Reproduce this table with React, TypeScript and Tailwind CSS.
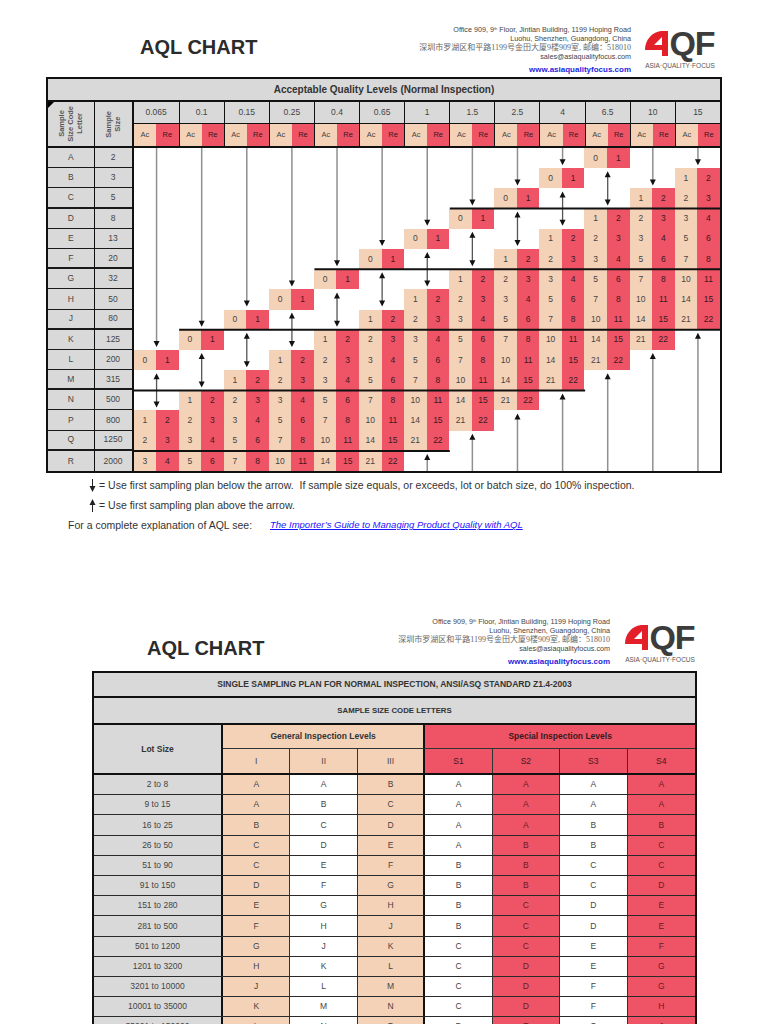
import React from "react";

const LEVELS = ["0.065", "0.1", "0.15", "0.25", "0.4", "0.65", "1", "1.5", "2.5", "4", "6.5", "10", "15"];

const ROWS: [string, string][] = [
  ["A", "2"], ["B", "3"], ["C", "5"], ["D", "8"], ["E", "13"], ["F", "20"],
  ["G", "32"], ["H", "50"], ["J", "80"], ["K", "125"], ["L", "200"], ["M", "315"],
  ["N", "500"], ["P", "800"], ["Q", "1250"], ["R", "2000"],
];

// step along the diagonal -> Ac / Re (steps 1 and 2 are arrows)
const PLANS: Record<number, [number, number]> = {
  0: [0, 1], 3: [1, 2], 4: [2, 3], 5: [3, 4], 6: [5, 6], 7: [7, 8], 8: [10, 11], 9: [14, 15], 10: [21, 22],
};

const GROUPS = [3, 6, 9, 12, 15];
const DATA_W = 586.5;
const CW = DATA_W / 26;
const RH = 20.2;

const PEACH = "bg-[#f4d2b8]";
const RED = "bg-[#ef5366]";

const LOTS: [string, string][] = [
  ["2 to 8", "AABAAAA"],
  ["9 to 15", "ABCAAAA"],
  ["16 to 25", "BCDAABB"],
  ["26 to 50", "CDEABBC"],
  ["51 to 90", "CEFBBCC"],
  ["91 to 150", "DFGBBCD"],
  ["151 to 280", "EGHBCDE"],
  ["281 to 500", "FHJBCDE"],
  ["501 to 1200", "GJKCCEF"],
  ["1201 to 3200", "HKLCDEG"],
  ["3201 to 10000", "JLMCDFG"],
  ["10001 to 35000", "KMNCDFH"],
  ["35001 to 150000", "LNPDEGJ"],
  ["150001 to 500000", "MPQDEGJ"],
  ["500001 and over", "NQRDEHK"],
];

const LOT_BG = ["bg-[#f4d2b8]", "bg-white", "bg-[#f4d2b8]", "bg-white", "bg-[#ef5366]", "bg-white", "bg-[#ef5366]"];

function Logo({ className }: { className: string }) {
  return (
    <div className={`flex w-[76px] flex-col items-center ${className}`}>
      <div className="flex h-[26px] items-center">
        <svg width="24" height="25" viewBox="0 0 24 25" className="shrink-0">
          <path
            fill="#e3202a"
            fillRule="evenodd"
            d="M0,19 C0,9 7,1 16,0 L23,0 L23,25 L17,25 L17,19 Z M17,14 L17,6 L9,14 Z"
          />
        </svg>
        <span className="text-[34px] font-bold leading-[26px] tracking-[-1px] text-[#3c3c3c]">QF</span>
      </div>
      <div className="mt-[6px] whitespace-nowrap text-[6.5px] leading-[8px] text-[#555]">
        ASIA<span className="text-[#e3202a]">·</span>QUALITY<span className="text-[#e3202a]">·</span>FOCUS
      </div>
    </div>
  );
}

function Header({
  boxCls,
  titleCls,
  addrCls,
  logoCls,
}: {
  boxCls: string;
  titleCls: string;
  addrCls: string;
  logoCls: string;
}) {
  return (
    <div className={`flex items-start ${boxCls}`}>
      <div className={`text-[20px] font-bold leading-[24px] text-[#2b2b2b] ${titleCls}`}>AQL CHART</div>
      <div className={`text-right text-[7.2px] leading-[9px] text-[#444] ${addrCls}`}>
        <div>Office 909, 9<sup className="text-[4px]">th</sup> Floor, Jintian Building, 1199 Hoping Road</div>
        <div>Luohu, Shenzhen, Guangdong, China</div>
        <div className="font-['Liberation_Serif','Noto_Sans_CJK_SC',serif] text-[8px] text-[#666]">
          深圳市罗湖区和平路1199号金田大厦9楼909室, 邮编：518010
        </div>
        <div>sales@asiaqualityfocus.com</div>
        <div className="mt-[4px] text-[8px] font-bold leading-[10px] text-[#1f1fe0]">www.asiaqualityfocus.com</div>
      </div>
      <Logo className={logoCls} />
    </div>
  );
}

function TableArrows() {
  const H = 16 * RH;
  const lines: React.ReactNode[] = [];
  const down = (x: number, y: number) => `${x - 3},${y - 6} ${x + 3},${y - 6} ${x},${y}`;
  const up = (x: number, y: number) => `${x - 3},${y + 6} ${x + 3},${y + 6} ${x},${y}`;

  LEVELS.forEach((_, j) => {
    const x = (2 * j + 1) * CW;
    const rowsDown = j <= 9 ? 10 - j : j === 11 ? 2 : j === 12 ? 1 : 0;
    if (rowsDown > 0) {
      const tip = rowsDown * RH - 3;
      lines.push(<line key={`d${j}`} x1={x} y1={0} x2={x} y2={tip - 5} stroke="#8f8f8f" strokeWidth={1.5} />);
      lines.push(<polygon key={`dh${j}`} points={down(x, tip)} fill="#111" />);
    }
    if (j <= 10) {
      const top = (11 - j) * RH + 3;
      const bot = (13 - j) * RH - 3;
      lines.push(<line key={`b${j}`} x1={x} y1={top + 5} x2={x} y2={bot - 5} stroke="#555" strokeWidth={1.3} />);
      lines.push(<polygon key={`bu${j}`} points={up(x, top)} fill="#111" />);
      lines.push(<polygon key={`bd${j}`} points={down(x, bot)} fill="#111" />);
    }
    if (j >= 6) {
      const tip = (21 - j) * RH + 3;
      lines.push(<line key={`u${j}`} x1={x} y1={tip + 5} x2={x} y2={H} stroke="#8f8f8f" strokeWidth={1.5} />);
      lines.push(<polygon key={`uh${j}`} points={up(x, tip)} fill="#111" />);
    }
  });

  GROUPS.forEach((g) => {
    const x1 = Math.max(0, 10 - g) * 2 * CW;
    const x2 = Math.min(13, 22 - g) * 2 * CW;
    lines.push(<line key={`g${g}`} x1={x1} y1={g * RH} x2={x2} y2={g * RH} stroke="#111" strokeWidth={2} />);
  });

  return (
    <svg
      className="pointer-events-none absolute inset-0"
      width={DATA_W}
      height={H}
      viewBox={`0 0 ${DATA_W} ${H}`}
    >
      {lines}
    </svg>
  );
}

function AqlTable() {
  return (
    <div className="ml-[46px] w-[676px] border-2 border-[#111] text-[8.5px] text-[#444]">
      <div className="flex h-[23px] items-center justify-center border-b-2 border-[#111] bg-[#d9d9d9] text-[10px] font-bold text-[#333]">
        Acceptable Quality Levels (Normal Inspection)
      </div>

      <div className="flex border-b-2 border-[#111]">
        <div className="relative flex w-[46.5px] items-center justify-center border-r-[1.5px] border-[#111] bg-[#d9d9d9]">
          <span className="absolute left-0 top-0 h-0 w-0 border-r-[6px] border-t-[6px] border-r-transparent border-t-black" />
          <div className="rotate-180 text-center text-[7.5px] font-bold leading-[9px] text-[#555] [writing-mode:vertical-rl]">
            Sample
            <br />
            Size Code
            <br />
            Letter
          </div>
        </div>
        <div className="flex w-[39px] items-center justify-center border-r-2 border-[#111] bg-[#d9d9d9]">
          <div className="rotate-180 text-center text-[7.5px] font-bold leading-[9px] text-[#555] [writing-mode:vertical-rl]">
            Sample
            <br />
            Size
          </div>
        </div>
        <div className="w-[586.5px]">
          <div className="flex h-[22px] border-b border-[#111]">
            {LEVELS.map((l, j) => (
              <div
                key={l}
                className={`flex w-[45.115px] items-center justify-center bg-[#d9d9d9] ${j ? "border-l-[1.5px] border-[#111]" : ""}`}
              >
                {l}
              </div>
            ))}
          </div>
          <div className="flex h-[22px] text-[7.5px]">
            {LEVELS.map((l, j) => (
              <div key={l} className={`flex w-[45.115px] ${j ? "border-l-[1.5px] border-[#111]" : ""}`}>
                <div className={`flex flex-1 items-center justify-center ${PEACH}`}>Ac</div>
                <div className={`flex flex-1 items-center justify-center text-[#3a1a1e] ${RED}`}>Re</div>
              </div>
            ))}
          </div>
        </div>
      </div>

      <div className="flex">
        <div className="w-[46.5px] border-r-[1.5px] border-[#111] bg-[#d9d9d9]">
          {ROWS.map(([letter], i) => (
            <div
              key={letter}
              className={`flex h-[20.2px] items-center justify-center border-[#1a1a1a] ${
                i === 15 ? "" : GROUPS.includes(i + 1) ? "border-b-[2.5px]" : "border-b-[1.5px]"
              }`}
            >
              {letter}
            </div>
          ))}
        </div>
        <div className="w-[39px] border-r-2 border-[#111] bg-[#d9d9d9]">
          {ROWS.map(([letter, size], i) => (
            <div
              key={letter}
              className={`flex h-[20.2px] items-center justify-center border-[#1a1a1a] ${
                i === 15 ? "" : GROUPS.includes(i + 1) ? "border-b-[2.5px]" : "border-b-[1.5px]"
              }`}
            >
              {size}
            </div>
          ))}
        </div>
        <div className="relative w-[586.5px]">
          {ROWS.map(([letter], i) => (
            <div key={letter} className="flex h-[20.2px]">
              {LEVELS.map((l, j) => {
                const plan = PLANS[i + j - 10];
                return (
                  <React.Fragment key={l}>
                    <div className={`flex w-[22.558px] items-center justify-center ${plan ? PEACH : ""}`}>
                      {plan ? plan[0] : ""}
                    </div>
                    <div className={`flex w-[22.558px] items-center justify-center text-[#3a1a1e] ${plan ? RED : ""}`}>
                      {plan ? plan[1] : ""}
                    </div>
                  </React.Fragment>
                );
              })}
            </div>
          ))}
          <TableArrows />
        </div>
      </div>
    </div>
  );
}

function ArrowGlyph({ up }: { up?: boolean }) {
  return (
    <svg width="7" height="13" viewBox="0 0 7 13" className="shrink-0">
      {up ? (
        <>
          <polygon points="0.5,6 6.5,6 3.5,0" fill="#222" />
          <line x1="3.5" y1="5" x2="3.5" y2="13" stroke="#222" strokeWidth="1" />
        </>
      ) : (
        <>
          <line x1="3.5" y1="0" x2="3.5" y2="8" stroke="#222" strokeWidth="1" />
          <polygon points="0.5,7 6.5,7 3.5,13" fill="#222" />
        </>
      )}
    </svg>
  );
}

function Notes() {
  return (
    <div className="mt-[2px] text-[10.5px] leading-[20px] text-[#333]">
      <div className="ml-[89px] flex items-center gap-[3px]">
        <ArrowGlyph />
        <span>= Use first sampling plan below the arrow.&nbsp; If sample size equals, or exceeds, lot or batch size, do 100% inspection.</span>
      </div>
      <div className="ml-[89px] flex items-center gap-[3px]">
        <ArrowGlyph up />
        <span>= Use first sampling plan above the arrow.</span>
      </div>
      <div className="ml-[68px] flex items-center">
        <span className="w-[202px]">For a complete explanation of AQL see:</span>
        <span className="text-[9.5px] italic text-[#1a14ff] underline">
          The Importer’s Guide to Managing Product Quality with AQL
        </span>
      </div>
    </div>
  );
}

function CodeTable() {
  return (
    <div className="ml-[92px] w-[605px] border-2 border-[#111] text-[8.5px] text-[#444]">
      <div className="flex h-[25px] items-center justify-center border-b-2 border-[#111] bg-[#d9d9d9] text-[8.5px] font-bold text-[#333]">
        SINGLE SAMPLING PLAN FOR NORMAL INSPECTION, ANSI/ASQ STANDARD Z1.4-2003
      </div>
      <div className="flex h-[27px] items-center justify-center border-b-2 border-[#111] bg-[#d9d9d9] text-[7.8px] font-bold text-[#333]">
        SAMPLE SIZE CODE LETTERS
      </div>
      <div className="flex border-b-2 border-[#111]">
        <div className="flex w-[129px] items-center justify-center border-r-2 border-[#111] bg-[#d9d9d9] text-[8.5px] font-bold text-[#333]">
          Lot Size
        </div>
        <div className="flex-1">
          <div className="flex h-[24px] border-b border-[#333] text-[8.5px] font-bold">
            <div className={`flex w-[202.3px] items-center justify-center border-r-2 border-[#111] text-[#333] ${PEACH}`}>
              General Inspection Levels
            </div>
            <div className={`flex flex-1 items-center justify-center text-[#3a1a1e] ${RED}`}>Special Inspection Levels</div>
          </div>
          <div className="flex h-[24px]">
            {["I", "II", "III", "S1", "S2", "S3", "S4"].map((h, k) => (
              <div
                key={h}
                className={`flex w-[67.43px] items-center justify-center ${k < 3 ? PEACH : RED} ${
                  k === 2 ? "border-r-2 border-[#111]" : k < 6 ? "border-r border-[#333]" : ""
                } ${k < 3 ? "" : "text-[#3a1a1e]"}`}
              >
                {h}
              </div>
            ))}
          </div>
        </div>
      </div>
      {LOTS.map(([lot, codes]) => (
        <div key={lot} className="flex h-[20.2px] border-b-[1.5px] border-[#2a2a2a]">
          <div className="flex w-[129px] items-center justify-center border-r-2 border-[#111] bg-[#d9d9d9]">{lot}</div>
          {codes.split("").map((c, k) => (
            <div
              key={k}
              className={`flex w-[67.43px] items-center justify-center ${LOT_BG[k]} ${
                k === 2 ? "border-r-2 border-[#111]" : k < 6 ? "border-r border-[#333]" : ""
              } ${k === 4 || k === 6 ? "text-[#6b1c24]" : ""}`}
            >
              {c}
            </div>
          ))}
        </div>
      ))}
    </div>
  );
}

export default function App() {
  return (
    <div className="h-[1024px] w-[768px] overflow-hidden bg-white font-['Liberation_Sans','Noto_Sans_CJK_SC',sans-serif]">
      <Header
        boxCls="h-[77px]"
        titleCls="ml-[140px] mt-[35px]"
        addrCls="ml-auto mt-[25px]"
        logoCls="ml-[11px] mr-[50px] mt-[30px]"
      />
      <AqlTable />
      <Notes />
      <Header
        boxCls="h-[136px]"
        titleCls="ml-[147px] mt-[101px]"
        addrCls="ml-auto mt-[82px]"
        logoCls="ml-[12px] mr-[70px] mt-[89px]"
      />
      <CodeTable />
    </div>
  );
}
